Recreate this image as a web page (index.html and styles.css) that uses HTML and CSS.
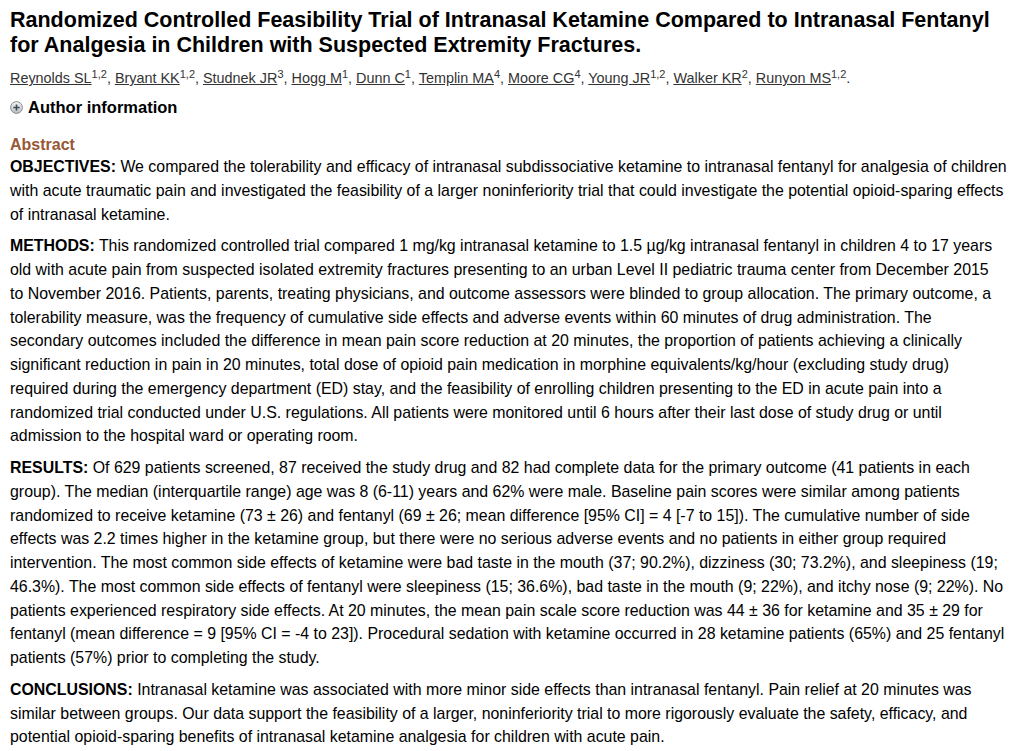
FILE: index.html
```html
<!DOCTYPE html>
<html lang="en">
<head>
<meta charset="utf-8">
<title>Randomized Controlled Feasibility Trial of Intranasal Ketamine</title>
<link rel="stylesheet" href="styles.css">
</head>
<body>
<div class="page">
  <h1 class="title">Randomized Controlled Feasibility Trial of Intranasal Ketamine Compared to Intranasal Fentanyl for Analgesia in Children with Suspected Extremity Fractures.</h1>
  <div class="authors"><a href="#">Reynolds SL</a><sup>1,2</sup>, <a href="#">Bryant KK</a><sup>1,2</sup>, <a href="#">Studnek JR</a><sup>3</sup>, <a href="#">Hogg M</a><sup>1</sup>, <a href="#">Dunn C</a><sup>1</sup>, <a href="#">Templin MA</a><sup>4</sup>, <a href="#">Moore CG</a><sup>4</sup>, <a href="#">Young JR</a><sup>1,2</sup>, <a href="#">Walker KR</a><sup>2</sup>, <a href="#">Runyon MS</a><sup>1,2</sup>.</div>
  <div class="author-info">
    <svg class="plus-icon" width="13" height="13" viewBox="0 0 13 13" aria-hidden="true">
      <defs>
        <linearGradient id="g" x1="0" y1="0" x2="0" y2="1">
          <stop offset="0" stop-color="#f4f4f4"/>
          <stop offset="1" stop-color="#b9bcc0"/>
        </linearGradient>
      </defs>
      <circle cx="6.5" cy="6.5" r="5.9" fill="url(#g)" stroke="#8a8d91" stroke-width="1"/>
      <path d="M3.4 6.5h6.2M6.5 3.4v6.2" stroke="#3c4a5a" stroke-width="1.6"/>
    </svg>
    <span>Author information</span>
  </div>
  <h3 class="abstract-head">Abstract</h3>
  <div class="abstract">
    <p><b>OBJECTIVES:</b> We compared the tolerability and efficacy of intranasal subdissociative ketamine to intranasal fentanyl for analgesia of children with acute traumatic pain and investigated the feasibility of a larger noninferiority trial that could investigate the potential opioid-sparing effects of intranasal ketamine.</p>
    <p><b>METHODS:</b> This randomized controlled trial compared 1 mg/kg intranasal ketamine to 1.5 µg/kg intranasal fentanyl in children 4 to 17 years old with acute pain from suspected isolated extremity fractures presenting to an urban Level II pediatric trauma center from December 2015 to&nbsp;November 2016. Patients, parents, treating physicians, and outcome assessors were blinded to group allocation. The primary outcome, a tolerability measure, was the frequency of cumulative side effects and adverse events within 60 minutes of drug administration. The secondary&nbsp;outcomes included the difference in mean pain score reduction at 20 minutes, the proportion of patients achieving a clinically significant reduction in pain in 20 minutes, total dose of opioid pain medication in morphine equivalents/kg/hour (excluding study drug) required&nbsp;during the emergency department (ED) stay, and the feasibility of enrolling children presenting to the ED in acute pain into a randomized trial conducted under U.S. regulations. All patients were monitored until 6 hours after their last dose of study drug or until admission to the hospital ward or operating room.</p>
    <p><b>RESULTS:</b> Of 629 patients screened, 87 received the study drug and 82 had complete data for the primary outcome (41 patients in each group). The median (interquartile range) age was 8 (6-11) years and 62% were male. Baseline pain scores were similar among patients randomized to receive ketamine (73 ± 26) and fentanyl (69 ± 26; mean difference [95% CI] = 4 [-7 to 15]). The cumulative number of side effects was 2.2 times higher in the ketamine group, but there were no serious adverse events and no patients in either group required intervention. The most common side effects of ketamine were bad taste in the mouth (37; 90.2%), dizziness (30; 73.2%), and sleepiness (19; 46.3%). The most common side effects of fentanyl were sleepiness (15; 36.6%), bad taste in the mouth (9; 22%), and itchy nose (9; 22%). No patients experienced respiratory side effects. At 20 minutes, the mean pain scale score reduction was 44 ± 36 for ketamine and 35 ± 29 for fentanyl (mean difference = 9 [95% CI = -4 to 23]). Procedural sedation with ketamine occurred in 28 ketamine patients (65%) and 25 fentanyl patients (57%) prior to completing the study.</p>
    <p><b>CONCLUSIONS:</b> Intranasal ketamine was associated with more minor side effects than intranasal fentanyl. Pain relief at 20 minutes was similar between groups. Our data support the feasibility of a larger, noninferiority trial to more rigorously evaluate the safety, efficacy, and potential opioid-sparing benefits of intranasal ketamine analgesia for children with acute pain.</p>
  </div>
</div>
</body>
</html>
```
FILE: styles.css
```css
html, body {
  margin: 0;
  padding: 0;
  background: #ffffff;
}
body {
  font-family: "Liberation Sans", Arial, Helvetica, sans-serif;
  color: #000;
}
.page {
  padding: 8px 12px 0 10px;
}
.title {
  margin: 0;
  font-size: 21.5px;
  line-height: 25px;
  font-weight: bold;
  color: #000;
}
.authors {
  margin-top: 11px;
  font-size: 14.4px;
  line-height: 18px;
  color: #333;
}
.authors a {
  color: #333;
  text-decoration: underline;
}
.authors sup {
  font-size: 11px;
  line-height: 0;
  vertical-align: 5px;
}
.author-info {
  margin-top: 10px;
  display: flex;
  align-items: center;
  gap: 5px;
  font-size: 16.5px;
  line-height: 20px;
  font-weight: bold;
  color: #000;
}
.plus-icon {
  display: block;
  flex: none;
}
.abstract-head {
  margin: 18px 0 0 0;
  font-size: 16px;
  line-height: 20px;
  font-weight: bold;
  color: #985735;
}
.abstract {
  font-size: 15.9px;
  line-height: 23.75px;
}
.abstract p {
  margin: 0 0 8px 0;
}
.abstract b {
  font-weight: bold;
}
```
